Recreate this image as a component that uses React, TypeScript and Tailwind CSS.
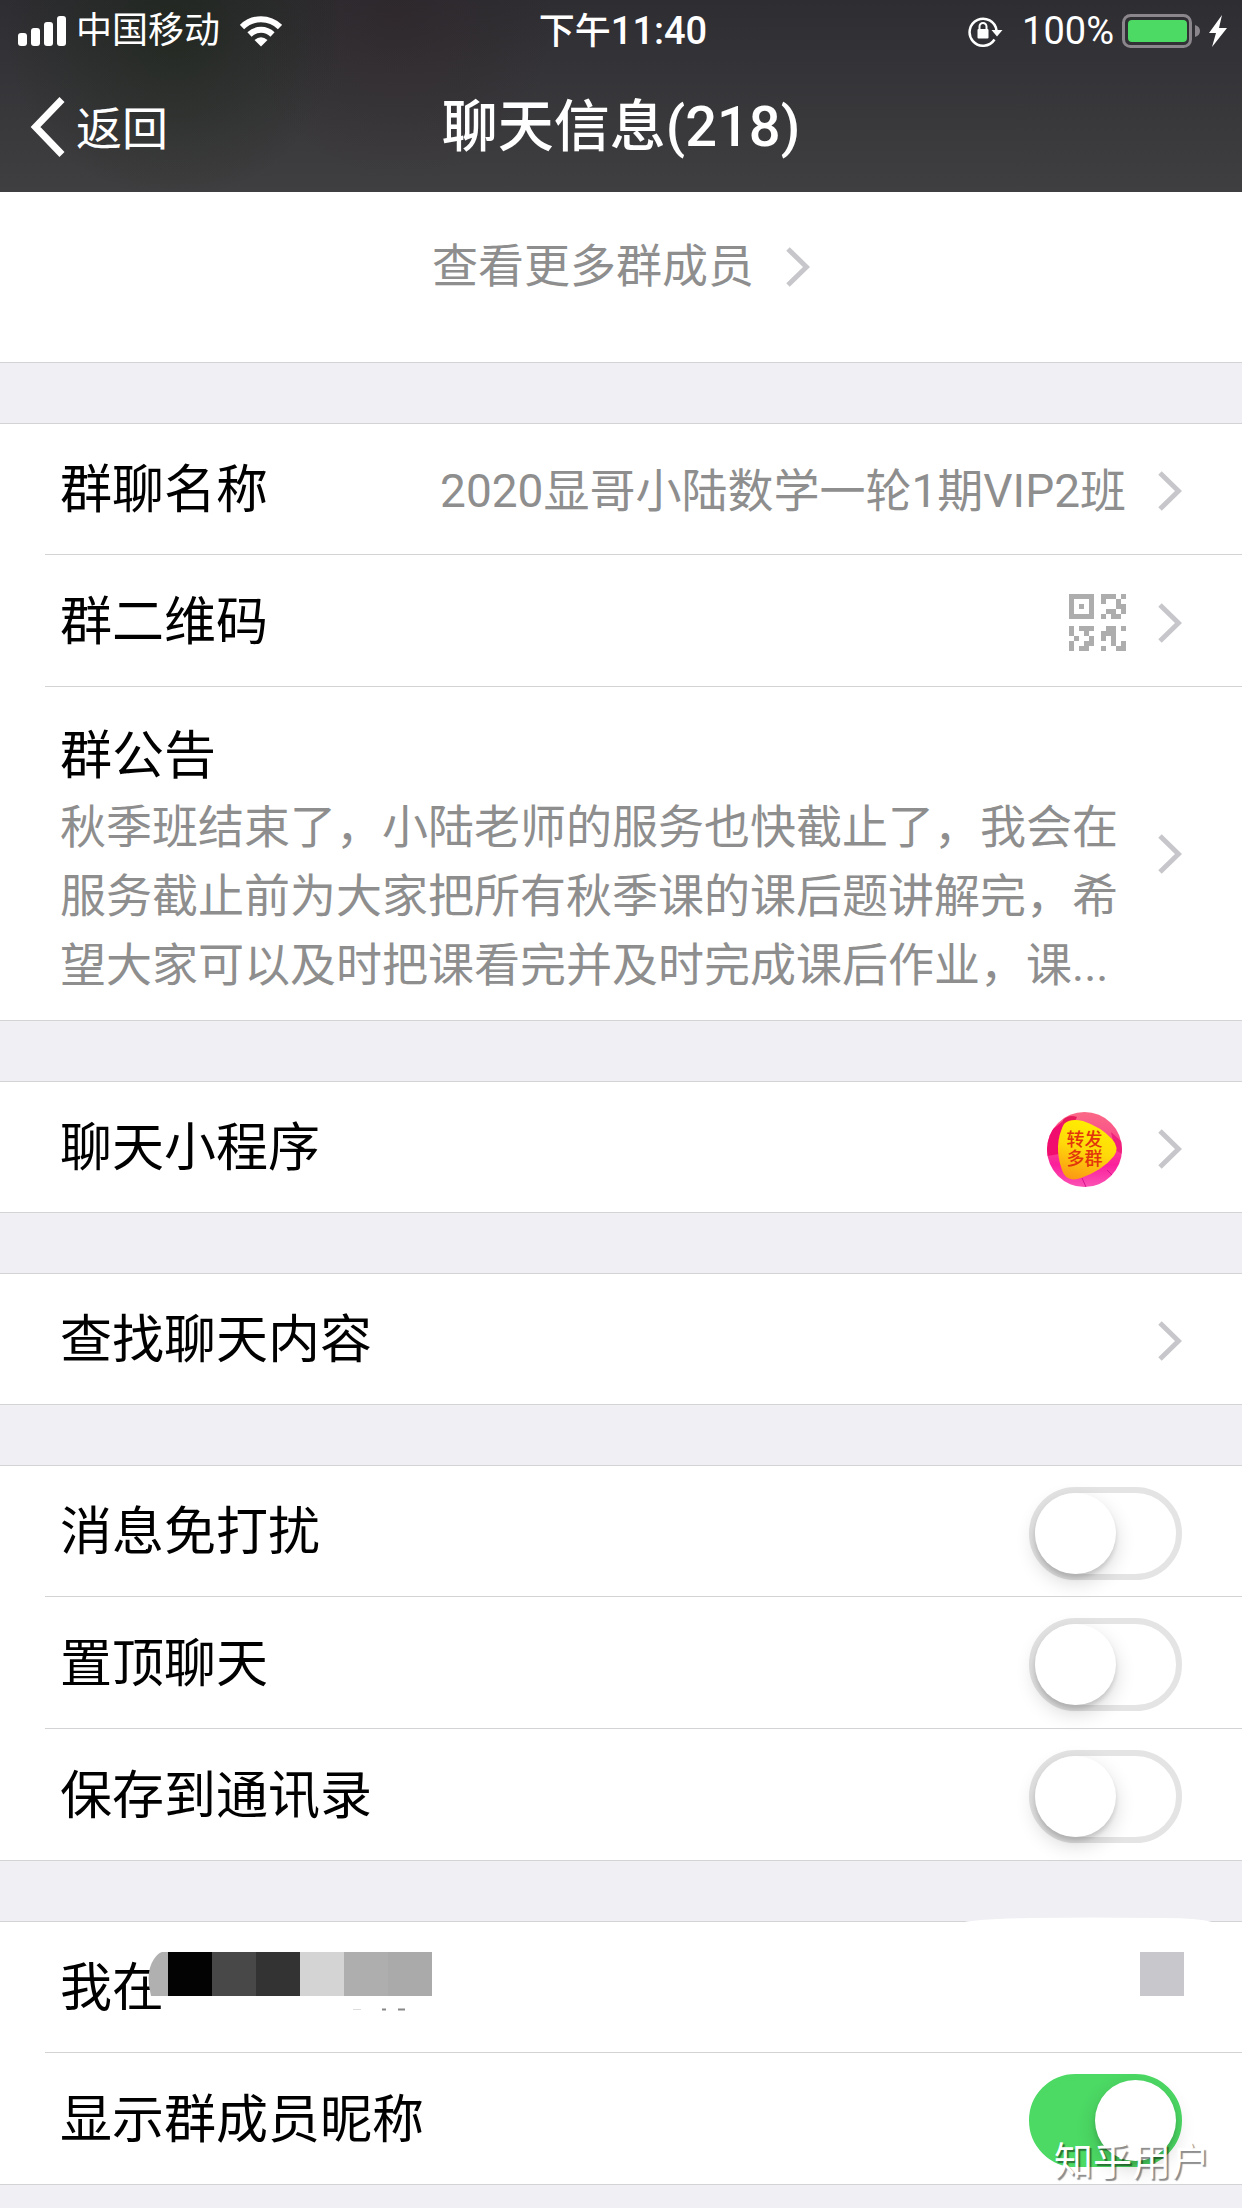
import type { ReactNode } from "react";

const qrRows: [number, number, string[]][] = [
  [0, 0, ["11111", "10001", "10101", "10001", "11111"]],
  [32, 0, ["11101", "10010", "00011", "01101", "10110"]],
  [0, 32, ["10111", "10010", "01001", "10011", "10110"]],
  [32, 32, ["01101", "11100", "10100", "00101", "10011"]],
];

function QrIcon() {
  return (
    <svg className="h-[57px] w-[57px] shrink-0" viewBox="0 0 57 57" fill="#adadad" shapeRendering="crispEdges" aria-hidden="true">
      {qrRows.map(([ox, oy, rows]) =>
        rows.map((row, y) =>
          row.split("").map((c, x) =>
            c === "1" ? <rect key={`${ox}-${oy}-${x}-${y}`} x={ox + x * 5} y={oy + y * 5} width="5" height="5" /> : null,
          ),
        ),
      )}
    </svg>
  );
}

function Chevron() {
  return (
    <svg className="h-10 w-6 shrink-0" viewBox="0 0 24 40" fill="none" stroke="#c7c7cb" strokeWidth="5" aria-hidden="true">
      <path d="M2 2 L20.500 20 L2 38" />
    </svg>
  );
}

function MiniProgramIcon() {
  return (
    <span className="relative mr-1 flex h-[75px] w-[75px] shrink-0 items-center justify-center">
      <svg className="absolute inset-0 h-full w-full" viewBox="0 0 75 75" aria-hidden="true">
        <defs>
          <linearGradient id="mpPink" x1="0" y1="0" x2="0" y2="1">
            <stop offset="0" stopColor="#fb6a86" />
            <stop offset="0.45" stopColor="#f9478c" />
            <stop offset="0.7" stopColor="#fb1f9c" />
            <stop offset="1" stopColor="#fb52b4" />
          </linearGradient>
          <linearGradient id="mpYellow" x1="0.600" y1="0" x2="0.300" y2="1">
            <stop offset="0" stopColor="#fff000" />
            <stop offset="0.5" stopColor="#ffd80a" />
            <stop offset="1" stopColor="#fb9a14" />
          </linearGradient>
          <clipPath id="mpClip">
            <circle cx="37.500" cy="37.500" r="37.500" />
          </clipPath>
        </defs>
        <g clipPath="url(#mpClip)">
          <rect width="75" height="75" fill="url(#mpPink)" />
          <path d="M0 22 L16 9 L12 42 L0 44 Z" fill="#f00d6e" />
          <path d="M16 8 Q22 2 30 5 L28 9 Q20 9 15 15 Z" fill="#e81a5c" />
          <path d="M64 20 L75 30 L75 42 L68 38 Z" fill="#f0207c" />
          <path d="M35 66 L39 75 M60 58 L66 64" stroke="#d4148c" strokeWidth="1" />
          <path d="M17 12 Q23 6 36 9 Q54 15 65 27 Q73 36 67 44 Q56 58 34 66 Q19 71 15 58 Q6 33 17 12 Z" fill="url(#mpYellow)" />
        </g>
      </svg>
      <span className="relative flex flex-col text-center text-[18px] leading-[19px] font-medium text-[#e2350c]">
        <span>转发</span>
        <span>多群</span>
      </span>
    </span>
  );
}

function Section({ children }: { children: ReactNode }) {
  return <section className="relative border-y border-[#d3d3d6] bg-white">{children}</section>;
}

const rowBase = "group relative block w-full text-left";
const rowInner = "flex min-h-[131px] items-center gap-8 px-[60px] pt-1 group-first:min-h-[130px]";

function Divider() {
  return <span className="ml-[45px] block h-px bg-[#d3d3d6] group-first:hidden" />;
}

function LinkRow({ label, children }: { label: string; children?: ReactNode }) {
  return (
    <button type="button" className={rowBase}>
      <Divider />
      <span className={rowInner}>
        <span className="shrink-0 text-[52px] leading-[72px] text-black">{label}</span>
        <span className="flex min-w-0 flex-1 justify-end text-[46px] leading-[69px] text-[#8e8e8e]">{children}</span>
        <Chevron />
      </span>
    </button>
  );
}

function ToggleRow({ id, label, on = false }: { id: string; label: string; on?: boolean }) {
  return (
    <div className={rowBase}>
      <Divider />
      <div className={rowInner}>
        <label htmlFor={id} className="flex-1 text-[52px] leading-[72px] text-black">
          {label}
        </label>
        <input
          id={id}
          type="checkbox"
          role="switch"
          defaultChecked={on}
          className="flex h-[93px] w-[153px] shrink-0 appearance-none items-center rounded-full border-[6px] border-[#e4e4e4] bg-white before:block before:h-[81px] before:w-[81px] before:rounded-full before:bg-white before:shadow-[0_8px_20px_rgba(0,0,0,0.16),0_4px_4px_rgba(0,0,0,0.12)] before:content-[''] checked:justify-end checked:border-[#4cd964] checked:bg-[#4cd964]"
        />
      </div>
    </div>
  );
}

function StatusBar() {
  return (
    <div className="grid h-[60px] grid-cols-[1fr_auto_1fr] items-center pt-[2px] pr-[14px] pl-[18px] text-[36px] leading-[48px]">
      <div className="flex items-center">
        <svg className="h-[30px] w-12" viewBox="0 0 48 30" fill="#fff" aria-hidden="true">
          <rect x="0" y="17" width="9" height="13" rx="3" />
          <rect x="13" y="12" width="9" height="18" rx="3" />
          <rect x="26" y="6" width="9" height="24" rx="3" />
          <rect x="39" y="0" width="9" height="30" rx="3" />
        </svg>
        <span className="ml-[10px]">中国移动</span>
        <svg className="ml-5 h-[31px] w-[42px]" viewBox="0 0 42 31" fill="none" stroke="#fff" strokeWidth="6" aria-hidden="true">
          <path d="M2 11 A27 27 0 0 1 40 11" />
          <path d="M9.500 18.500 A16.500 16.500 0 0 1 32.500 18.500" />
          <path d="M21 30.500 L14.500 24 Q21 18.500 27.500 24 Z" fill="#fff" stroke="none" />
        </svg>
      </div>
      <div className="font-medium">
        下午<span className="text-[38px]">11:40</span>
      </div>
      <div className="flex items-center justify-end">
        <svg className="h-8 w-9" viewBox="0 0 36 32" aria-hidden="true">
          <path d="M26.500 24.500 A13.500 13.500 0 1 1 28.500 15.500" fill="none" stroke="#fff" strokeWidth="2.500" />
          <path d="M23.500 15 H34.500 L29 21.500 Z" fill="#fff" />
          <rect x="9.500" y="14" width="11" height="9.500" rx="1" fill="#fff" />
          <path d="M11.500 15 V11.500 a3.500 3.500 0 0 1 7 0 V15" fill="none" stroke="#fff" strokeWidth="2" />
        </svg>
        <span className="ml-[18px] text-[38px]">100%</span>
        <svg className="ml-2 h-[34px] w-[106px]" viewBox="0 0 106 34" aria-hidden="true">
          <rect x="1.500" y="1.500" width="67" height="31" rx="7" fill="none" stroke="#8b858c" strokeWidth="3" />
          <rect x="6" y="6" width="59" height="22" rx="4" fill="#4cd964" />
          <path d="M73 11 Q78 12.500 78 17 Q78 21.500 73 23 Z" fill="#8b858c" />
          <path d="M100 1 L87 19 H94 L90 33 L105 14 H97 Z" fill="#fff" />
        </svg>
      </div>
    </div>
  );
}

export default function App() {
  return (
    <div className="min-h-screen w-full bg-[#efeff4] font-['Roboto','Noto_Sans_CJK_SC',sans-serif]">
      <header className="bg-[radial-gradient(circle_at_14%_15%,rgba(15,30,8,0.4),transparent_170px),radial-gradient(circle_at_32%_10%,rgba(45,20,22,0.2),transparent_160px),linear-gradient(to_bottom,#2e2d32,#3f3e40)] text-white">
        <StatusBar />
        <nav className="grid h-[132px] grid-cols-[1fr_auto_1fr] items-center px-[30px] pt-[2px]">
          <button type="button" className="flex items-center gap-[10px] justify-self-start text-[46px] leading-[66px]">
            <svg className="h-[60px] w-9" viewBox="0 0 36 60" fill="none" stroke="#fff" strokeWidth="7" aria-hidden="true">
              <path d="M32 2.500 L5.500 30 L32 57.500" />
            </svg>
            <span className="pt-1">返回</span>
          </button>
          <h1 className="text-[56px] leading-[72px] font-medium">聊天信息(218)</h1>
        </nav>
      </header>

      <main className="flex flex-col gap-[60px]">
        <section className="border-b border-[#d3d3d6] bg-white pt-10 pb-[61px]">
          <button type="button" className="flex w-full items-center justify-center gap-8 text-[46px] leading-[69px] text-[#8e8e8e]">
            查看更多群成员
            <Chevron />
          </button>
        </section>

        <Section>
          <LinkRow label="群聊名称">
            <span>2020显哥小陆数学一轮1期VIP2班</span>
          </LinkRow>
          <LinkRow label="群二维码">
            <QrIcon />
          </LinkRow>
          <button type="button" className={rowBase}>
            <Divider />
            <span className="flex items-center gap-8 px-[60px]">
              <span className="min-w-0 flex-1 pt-[34px] pb-5">
                <span className="block text-[52px] leading-[72px] text-black">群公告</span>
                <span className="block text-[46px] leading-[69px] text-[#8e8e8e]">
                  秋季班结束了，小陆老师的服务也快截止了，我会在服务截止前为大家把所有秋季课的课后题讲解完，希望大家可以及时把课看完并及时完成课后作业，课...
                </span>
              </span>
              <Chevron />
            </span>
          </button>
        </Section>

        <Section>
          <LinkRow label="聊天小程序">
            <MiniProgramIcon />
          </LinkRow>
        </Section>

        <Section>
          <LinkRow label="查找聊天内容" />
        </Section>

        <Section>
          <ToggleRow id="mute" label="消息免打扰" />
          <ToggleRow id="pin" label="置顶聊天" />
          <ToggleRow id="save" label="保存到通讯录" />
        </Section>

        <Section>
          <div className={rowBase}>
            <div className={rowInner}>
              <span className="text-[52px] leading-[72px] text-black">我在</span>
            </div>
            <svg className="absolute top-[30px] left-[148px] h-[60px] w-[285px]" viewBox="0 0 285 60" aria-hidden="true">
              <path d="M14 0 H20 V44 H3 Q-3 20 6 7 Q10 1 14 0 Z" fill="#b0b0b0" />
              <rect x="20" width="44" height="44" fill="#030303" />
              <rect x="64" width="44" height="44" fill="#484848" />
              <rect x="108" width="44" height="44" fill="#333333" />
              <rect x="152" width="44" height="44" fill="#d4d4d4" />
              <rect x="196" width="44" height="44" fill="#aeaeae" />
              <rect x="240" width="44" height="44" fill="#aaaaaa" />
              <path d="M205 57.500 h8" stroke="#ddd" strokeWidth="1" />
              <path d="M234 57.500 h4 M250 57.500 h7" stroke="#888" strokeWidth="2" />
            </svg>
            <span className="absolute top-[30px] right-[58px] h-11 w-11 bg-[#c7c7cc]" />
          </div>
          <ToggleRow id="nick" label="显示群成员昵称" on />
          <svg className="absolute -top-[5px] right-[28px] h-[6px] w-[254px]" viewBox="0 0 254 6" preserveAspectRatio="none" fill="#fff" aria-hidden="true">
            <path d="M0 6 Q14 2 70 1 Q130 0 200 1 Q244 1 254 6 Z" />
          </svg>
          <span className="pointer-events-none absolute right-[32px] bottom-0 text-[39px] leading-[44px] text-white [text-shadow:2px_2px_1px_rgba(0,0,0,0.45)]">
            知乎用户
          </span>
        </Section>
      </main>
    </div>
  );
}
